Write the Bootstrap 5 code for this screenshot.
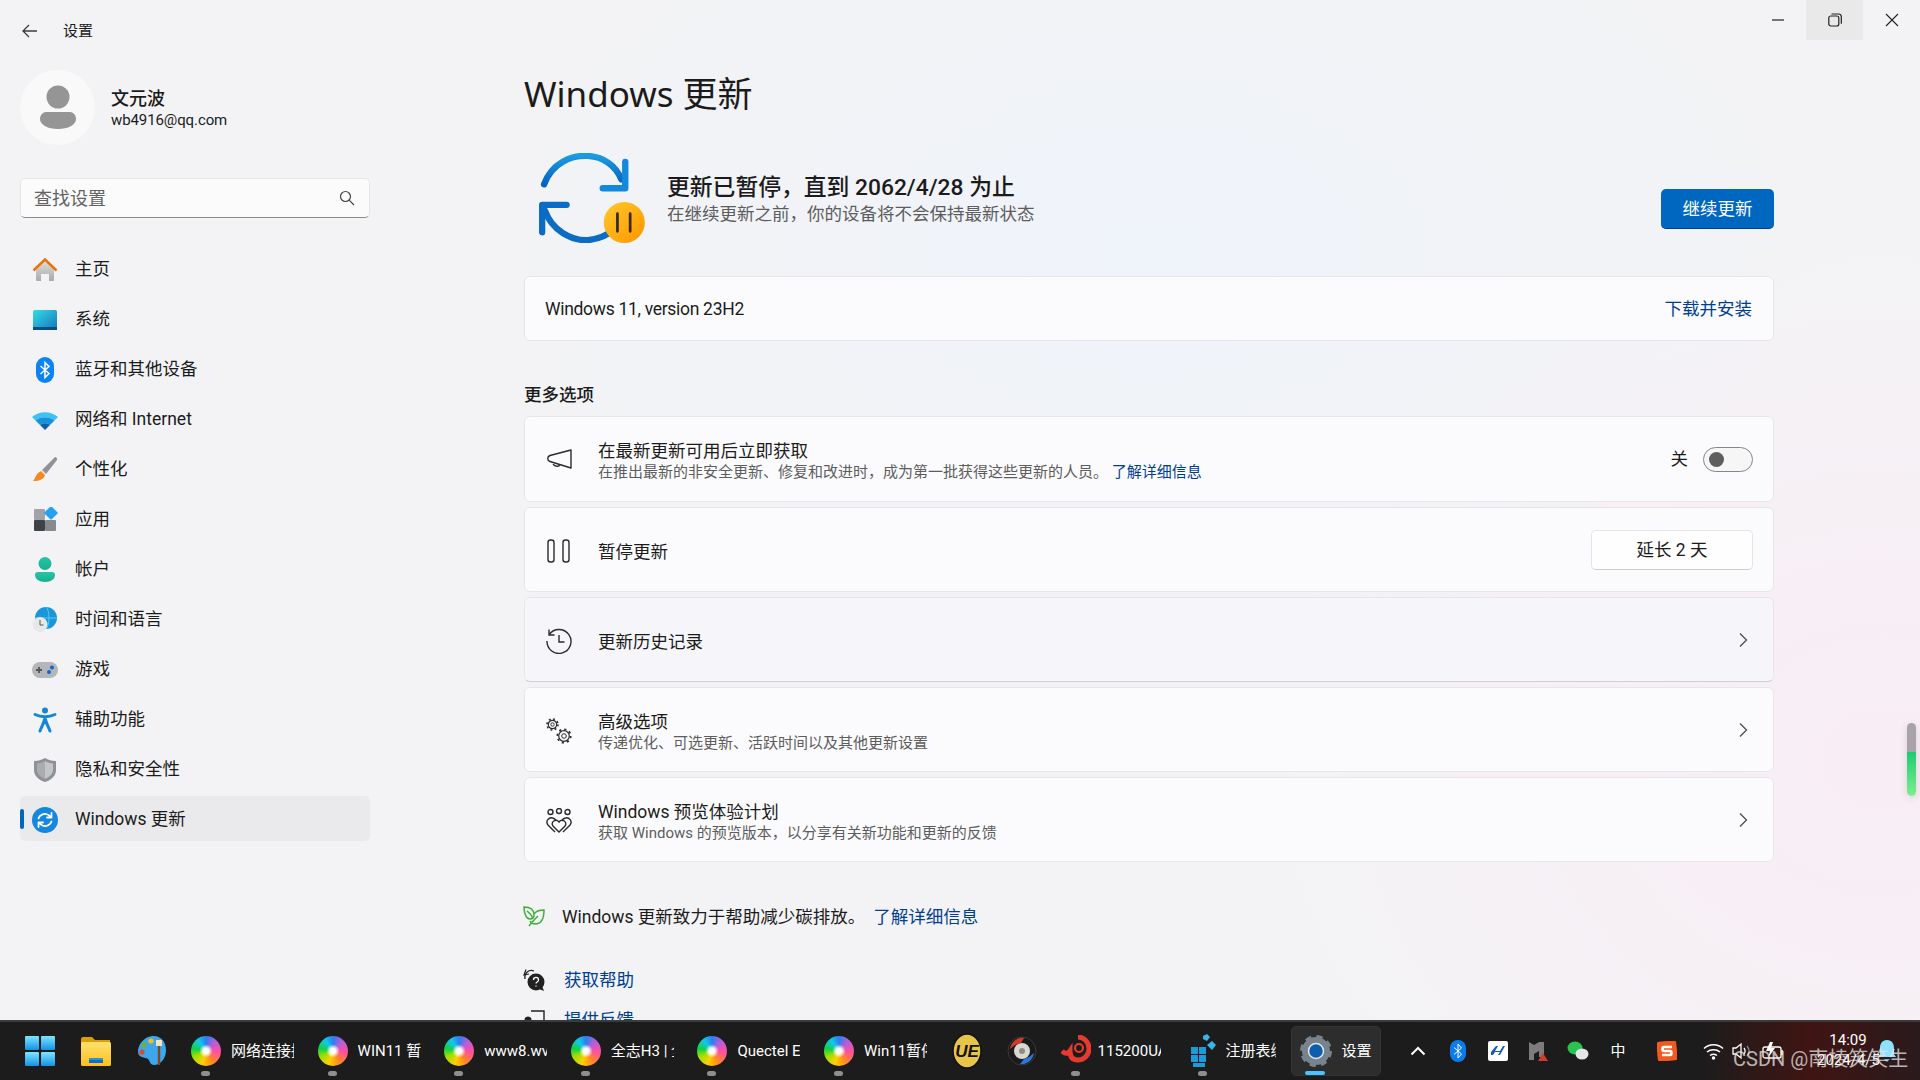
<!DOCTYPE html>
<html lang="zh-CN">
<head>
<meta charset="UTF-8">
<meta name="viewport" content="width=device-width, initial-scale=1">
<title>设置 - Windows 更新</title>
<link rel="stylesheet" href="https://cdn.jsdelivr.net/npm/bootstrap@5.3.0/dist/css/bootstrap.min.css">
<style>
html, body { height: 100%; }
body { width: 1920px; height: 1080px; overflow: hidden; font-family: Roboto, "Noto Sans CJK SC", sans-serif; font-size: 17.5px; color: #1b1b1b; background: #f3f3f3; }
a { text-decoration: none; }
.app-window { height: 1020px; overflow: hidden; background:
  radial-gradient(ellipse 620px 520px at 1880px 760px, #f9edf5 0%, rgba(249,237,245,0) 100%),
  radial-gradient(ellipse 700px 420px at 1150px 250px, #eff3fa 0%, rgba(239,243,250,0) 100%),
  #f3f3f5; }
.side-col { width: 390px; padding-left: 20px; flex: none; }
.back-row { height: 62px; font-size: 15px; }
.back-row span { margin-left: 23px; }
.user-row { height: 75px; margin-top: 8px; }
.avatar-circle { width: 75px; height: 75px; border-radius: 50%; background: #f9f9f9; }
.user-name { font-size: 18px; font-weight: 500; line-height: 24px; margin-top: 2px; }
.user-mail { font-size: 15px; line-height: 20px; margin-top: -1px; letter-spacing: -.1px; }
.search-box { width: 350px; height: 40px; margin-top: 33px; background: #fbfbfb; border: 1px solid #e6e6e6; border-bottom-color: #8b8b8b; border-radius: 5px; padding: 0 14px 0 13px; color: #636363; font-size: 18px; }
.side-nav { margin-top: 28px; width: 350px; }
.side-item { height: 45px; margin-bottom: 5px; color: #1b1b1b; padding-left: 12px; padding-top: 2px; border-radius: 5px; position: relative; }
.side-item svg { width: 26px; height: 26px; margin-right: 17px; flex: none; }
.side-item.is-on { background: #eaeaec; }
.side-item.is-on::before { content: ""; position: absolute; left: 0; top: 13px; width: 4px; height: 20px; border-radius: 2px; background: #0067c0; }
.main-col { width: 1250px; margin-left: 134px; flex: none; }
.page-title { font-family: "Noto Sans", "Noto Sans CJK SC", sans-serif; font-size: 35px; font-weight: 400; line-height: 50px; margin: 69px 0 0; }
.status-row { height: 96px; margin-top: 31px; }
.status-pic { width: 143px; flex: none; padding-left: 15px; }
.status-head { font-size: 22.8px; line-height: 30px; font-weight: 500; margin-top: 2px; }
.status-sub { line-height: 24px; color: #5d5d5d; margin-top: -1px; }
.btn-go { width: 113px; height: 40px; padding: 2px 0 0; font-size: 17.5px; background: #0067c0; border: 0; border-bottom: 1px solid #003e92; border-radius: 5px; color: #fff; margin-bottom: 17px; }
.pane { background: #fbfbfd; border: 1px solid #e7e7ea; border-radius: 6px; }
.pane-ver { height: 65px; margin-top: 30px; padding: 2px 21px 0 20px; }
.pane-ver span { letter-spacing: -.3px; }
.blue-link { color: #003e92; }
.section-label { line-height: 24px; margin-top: 42px; margin-bottom: 9px; font-weight: 500; font-size: 17.5px; }
.opt-list { gap: 5px; }
.opt-row { height: 85px; padding-right: 22px; padding-top: 4px; }
.opt-row.first-row { height: 86px; }
.opt-row.hover-row { background: #f6f6fa; border-bottom-color: #cfcfd4; }
.opt-ico { width: 73px; padding-left: 21px; flex: none; margin-top: -3px; }
.opt-title { line-height: 22px; }
.opt-sub { font-size: 15px; line-height: 20px; color: #5d5d5d; }
.opt-sub a { color: #003e92; }
.off-word { margin-right: 15px; margin-top: -3px; }
.toggle-shape { width: 50px; height: 25px; border: 1px solid #868686; border-radius: 13px; background: #f6f6f6; padding-left: 5px; margin-right: -2px; margin-top: -3px; }
.toggle-shape i { display: block; width: 15px; height: 15px; border-radius: 50%; background: #5e5e5e; }
.btn-ext { width: 162px; height: 40px; padding: 0; background: #fefefe; border: 1px solid #e5e5e5; border-bottom-color: #cdcdcd; border-radius: 5px; font-size: 17.5px; color: #1b1b1b; margin-right: -2px; margin-top: -3px; }
.chev-ico { margin-top: -3px; }
.foot-row { height: 30px; }
.foot-row svg { width: 24px; height: 24px; margin-left: -2px; margin-right: 16px; flex: none; }
.foot-row.help-row svg { margin-right: 18px; }
.vol-bar { position: absolute; left: 1907px; top: 723px; width: 9px; height: 73px; border-radius: 5px; background: linear-gradient(#a7a3a7 0 40%, #1fcb73 40%, #7cef8c 100%); box-shadow: 0 2px 8px rgba(0,0,0,.12); }
.task-bar { height: 60px; color: #fff; font-size: 15px; border-top: 2px solid #3b3b3b; padding-left: 12px; background: linear-gradient(90deg, #1c1c1c 0 1700px, #3f1512 1810px, #2a1a1d 1920px); }
.tb-ico { width: 56px; height: 100%; flex: none; }
.tb-app { width: 126.6px; height: 100%; padding-left: 11px; flex: none; position: relative; }
.tb-app svg, .tb-cur svg { flex: none; }
.tb-app .tb-label { width: 63px; margin-left: 10px; white-space: nowrap; overflow: hidden; }
.tb-app::after { content: ""; position: absolute; left: 21px; top: 49px; width: 9px; height: 5px; border-radius: 3px; background: #8f8f8f; }
.swirl { width: 30px; height: 30px; border-radius: 50%; flex: none; background: radial-gradient(circle, #fff 0 12%, rgba(255,255,255,0) 32%), conic-gradient(#2a7ff0, #b25fd8 12%, #ff4fa0 26%, #ff8a1e 42%, #ffd000 55%, #9be000 68%, #12d04a 78%, #12c8e8 90%, #2a7ff0); }
.tb-cur { width: 90px; height: 50px; padding-left: 8px; margin: 0; background: #2d2d2d; border: 1px solid #353535; border-radius: 5px; position: relative; flex: none; }
.tb-cur span { margin-left: 10px; }
.tb-cur::after { content: ""; position: absolute; left: 13px; bottom: 0; width: 20px; height: 4px; border-radius: 2px; background: #4cc2ff; }
.tray-box { margin-left: auto; padding-right: 25px; height: 100%; }
.tray-ico { height: 100%; flex: none; }
.clock-box { width: 62px; margin-left: 27px; margin-top: -3px; text-align: center; line-height: 20px; font-size: 15px; flex: none; }
.mark-text { position: absolute; left: 1733px; top: 1046px; font-size: 20px; line-height: 26px; color: rgba(232,232,232,.75); white-space: nowrap; }
</style>
</head>
<body>

<svg width="0" height="0" class="position-absolute">
  <defs>
    <linearGradient id="gBlue" x1="0" y1="0" x2="0" y2="1"><stop offset="0" stop-color="#1a9be2"/><stop offset="1" stop-color="#0664bd"/></linearGradient>
    <linearGradient id="gOrange" x1="0" y1="0" x2="1" y2="1"><stop offset="0" stop-color="#ffc92a"/><stop offset="1" stop-color="#ff9500"/></linearGradient>
    <linearGradient id="gWall" x1="0" y1="0" x2="0" y2="1"><stop offset="0" stop-color="#dcdcdc"/><stop offset="1" stop-color="#a9a9a9"/></linearGradient>
    <linearGradient id="gSys" x1="0" y1="0" x2="1" y2="1"><stop offset="0" stop-color="#35dbe6"/><stop offset="1" stop-color="#1276bd"/></linearGradient>
    <linearGradient id="gTeal" x1="0" y1="0" x2="0" y2="1"><stop offset="0" stop-color="#2cc3a8"/><stop offset="1" stop-color="#13b08f"/></linearGradient>
    <linearGradient id="gWin" x1="0" y1="0" x2="0" y2="1"><stop offset="0" stop-color="#7ce6ff"/><stop offset="1" stop-color="#1491e6"/></linearGradient>
    <linearGradient id="gFold" x1="0" y1="0" x2="0" y2="1"><stop offset="0" stop-color="#ffdf70"/><stop offset="1" stop-color="#fcc21b"/></linearGradient>
    <symbol id="lineChev" viewBox="0 0 16 16"><path d="M5 1.500 11.500 8 5 14.500" fill="none" stroke="#4c4c4c" stroke-width="1.300"/></symbol>
  </defs>
</svg>

<div class="app-window d-flex position-relative">

  <aside class="side-col">
    <div class="back-row d-flex align-items-center">
      <svg width="20" height="20" viewBox="0 0 20 20"><path d="M17 10H3M9 4 3 10l6 6" fill="none" stroke="#3c3c3c" stroke-width="1.300"/></svg>
      <span>设置</span>
    </div>
    <div class="user-row d-flex align-items-center">
      <div class="avatar-circle d-flex align-items-center justify-content-center me-3">
        <svg width="38" height="46" viewBox="0 0 38 46"><circle cx="19" cy="12" r="11.500" fill="#959595"/><path d="M1 34c0-4 3-7 6-7h24c3 0 6 3 6 7 0 6-8 10-18 10S1 40 1 34z" fill="#959595"/></svg>
      </div>
      <div>
        <div class="user-name">文元波</div>
        <div class="user-mail">wb4916@qq.com</div>
      </div>
    </div>
    <div class="search-box d-flex align-items-center justify-content-between">
      <span>查找设置</span>
      <svg width="16" height="16" viewBox="0 0 16 16"><circle cx="6.500" cy="6.500" r="5" fill="none" stroke="#444" stroke-width="1.200"/><path d="m10.200 10.200 4.800 4.800" stroke="#444" stroke-width="1.200"/></svg>
    </div>

    <nav class="side-nav nav flex-column">
      <a class="side-item d-flex align-items-center" href="#">
        <svg viewBox="0 0 26 26"><path d="M4 13 13 4.500 22 13V23a1 1 0 0 1-1 1h-4v-7H9v7H5a1 1 0 0 1-1-1z" fill="url(#gWall)"/><path d="M1.500 13.500 13 2.500l11.500 11" fill="none" stroke="#e8730c" stroke-width="2.600"/></svg>
        主页
      </a>
      <a class="side-item d-flex align-items-center" href="#">
        <svg viewBox="0 0 26 26"><rect x="1" y="3" width="24" height="20" rx="1.500" fill="url(#gSys)"/><rect x="1" y="20" width="24" height="3" fill="#0b4d7c"/></svg>
        系统
      </a>
      <a class="side-item d-flex align-items-center" href="#">
        <svg viewBox="0 0 26 26"><rect x="4" y="0" width="18" height="26" rx="9" fill="#0a84f4"/><path d="M8.500 9 17 16.500 13 20.500V5.500l4 4L8.500 17" fill="none" stroke="#fff" stroke-width="1.500"/></svg>
        蓝牙和其他设备
      </a>
      <a class="side-item d-flex align-items-center" href="#">
        <svg viewBox="0 0 26 26"><path d="M0 10C7 3.500 19 3.500 26 10l-3.500 3.500c-5-4.500-14-4.500-19 0z" fill="#3ec1f3"/><path d="M3.500 13.500c5-4.500 14-4.500 19 0L18 18c-3-2.500-7-2.500-10 0z" fill="#1992de"/><path d="M8 18c3-2.500 7-2.500 10 0l-5 5z" fill="#0c5fa8"/></svg>
        网络和 Internet
      </a>
      <a class="side-item d-flex align-items-center" href="#">
        <svg viewBox="0 0 26 26"><path d="M23 0c1.500 0 2.500 1.500 2 3L14 17l-4-4z" fill="#8f9398"/><path d="M9 14l4 4c-1 4-5 6-12 6 2.500-2 2-7 8-10z" fill="#f38a1c"/></svg>
        个性化
      </a>
      <a class="side-item d-flex align-items-center" href="#">
        <svg viewBox="0 0 26 26"><rect x="2" y="2" width="11" height="11" rx="1" fill="#9fa3a8"/><rect x="2" y="13" width="11" height="11" rx="1" fill="#3f4347"/><rect x="13" y="13" width="11" height="11" rx="1" fill="#868a8e"/><rect x="14" y="1" width="10" height="10" rx="1" fill="#27a0ee" transform="rotate(45 19 6)"/></svg>
        应用
      </a>
      <a class="side-item d-flex align-items-center" href="#">
        <svg viewBox="0 0 26 26"><circle cx="13" cy="6.500" r="6.500" fill="url(#gTeal)"/><path d="M3 18a3 3 0 0 1 3-3h14a3 3 0 0 1 3 3c0 4-4 7-10 7S3 22 3 18z" fill="url(#gTeal)"/></svg>
        帐户
      </a>
      <a class="side-item d-flex align-items-center" href="#">
        <svg viewBox="0 0 26 26"><circle cx="14" cy="11" r="11" fill="#1a97dc"/><path d="M14 0c4 3 4 19 0 22M3 11h22" stroke="#5cc7ee" fill="none"/><circle cx="8" cy="17.500" r="7.500" fill="#e8e8e8"/><path d="M8 13v5h3.500" stroke="#555" fill="none"/></svg>
        时间和语言
      </a>
      <a class="side-item d-flex align-items-center" href="#">
        <svg viewBox="0 0 26 26"><rect x="0" y="5" width="26" height="16" rx="8" fill="#b4b6ba"/><path d="M7 10v6M4 13h6" stroke="#555" stroke-width="1.800"/><circle cx="20" cy="10.500" r="2" fill="#1267cf"/><circle cx="17" cy="15" r="2" fill="#1267cf"/></svg>
        游戏
      </a>
      <a class="side-item d-flex align-items-center" href="#">
        <svg viewBox="0 0 26 26"><circle cx="13" cy="3.500" r="3" fill="#1685d8"/><path d="M3 7.500c3 1.500 6 2.300 10 2.300s7-.8 10-2.300M13 10c-.5 5-3 9-5 14M13 10c.5 5 3 9 5 14" fill="none" stroke="#1685d8" stroke-width="3" stroke-linecap="round"/></svg>
        辅助功能
      </a>
      <a class="side-item d-flex align-items-center" href="#">
        <svg viewBox="0 0 26 26"><path d="M13 1c3 2 7 3 11 3v9c0 6-5 10-11 12C7 23 2 19 2 13V4c4 0 8-1 11-3z" fill="#8e9296"/><path d="M13 4c2.500 1.500 5 2.300 8 2.500V13c0 4-3.500 7-8 9z" fill="#c3c5c8"/><path d="M13 4c-2.500 1.500-5 2.300-8 2.500V13c0 4 3.500 7 8 9z" fill="#a9acb0"/></svg>
        隐私和安全性
      </a>
      <a class="side-item is-on d-flex align-items-center" href="#">
        <svg viewBox="0 0 26 26"><circle cx="13" cy="13" r="13" fill="#1488dc"/><path d="M6.500 11.500C7.500 8 12 6 15.500 7.500c1.500.6 2.500 1.500 3.200 2.700M19.500 6v4.500H15M19.500 14.500C18.500 18 14 20 10.500 18.500c-1.500-.6-2.500-1.500-3.200-2.700M6.500 20v-4.500H11" fill="none" stroke="#fff" stroke-width="1.800" stroke-linecap="round" stroke-linejoin="round"/></svg>
        Windows 更新
      </a>
    </nav>
  </aside>

  <main class="main-col">
    <h1 class="page-title">Windows 更新</h1>

    <div class="status-row d-flex align-items-center">
      <div class="status-pic">
        <svg width="106" height="90" viewBox="0 0 108 92">
          <path d="M5 32C13 10 33 2 50 3c15 1 28 9 34 24" fill="none" stroke="url(#gBlue)" stroke-width="6.500" stroke-linecap="round"/>
          <path d="M88 9v27H65" fill="none" stroke="#1488dc" stroke-width="6.500" stroke-linecap="round" stroke-linejoin="round"/>
          <path d="M6 59c7 20 27 31 44 30 10-1 19-4 26-11" fill="none" stroke="#0a6cc4" stroke-width="6.500" stroke-linecap="round"/>
          <path d="M3 81V53h25" fill="none" stroke="#0a6cc4" stroke-width="6.500" stroke-linecap="round" stroke-linejoin="round"/>
          <circle cx="87" cy="71" r="21" fill="url(#gOrange)"/>
          <path d="M80 62v18M93 62v18" stroke="#3a2a10" stroke-width="2.800" stroke-linecap="round"/>
        </svg>
      </div>
      <div class="flex-grow-1">
        <div class="status-head">更新已暂停，直到 2062/4/28 为止</div>
        <div class="status-sub">在继续更新之前，你的设备将不会保持最新状态</div>
      </div>
      <button class="btn btn-go align-self-end">继续更新</button>
    </div>

    <div class="pane pane-ver d-flex align-items-center justify-content-between">
      <span>Windows 11, version 23H2</span>
      <a class="blue-link" href="#">下载并安装</a>
    </div>

    <div class="section-label">更多选项</div>

    <div class="opt-list d-flex flex-column">
      <div class="pane opt-row first-row d-flex align-items-center">
        <div class="opt-ico">
          <svg width="26" height="26" viewBox="0 0 26 26"><path d="M25 3 4 8.500c-3 1-3 5 0 6L25 21zM7 15.500c0 4 6 5 7 2" fill="none" stroke="#2b2b2b" stroke-width="1.400" stroke-linejoin="round"/></svg>
        </div>
        <div class="flex-grow-1">
          <div class="opt-title">在最新更新可用后立即获取</div>
          <div class="opt-sub">在推出最新的非安全更新、修复和改进时，成为第一批获得这些更新的人员。 <a href="#">了解详细信息</a></div>
        </div>
        <span class="off-word">关</span>
        <div class="toggle-shape d-flex align-items-center"><i></i></div>
      </div>

      <div class="pane opt-row d-flex align-items-center">
        <div class="opt-ico">
          <svg width="26" height="26" viewBox="0 0 26 26"><rect x="2" y="2" width="6" height="22" rx="2.500" fill="none" stroke="#2b2b2b" stroke-width="1.400"/><rect x="17" y="2" width="6" height="22" rx="2.500" fill="none" stroke="#2b2b2b" stroke-width="1.400"/></svg>
        </div>
        <div class="flex-grow-1 opt-title">暂停更新</div>
        <button class="btn btn-ext">延长 2 天</button>
      </div>

      <div class="pane opt-row hover-row d-flex align-items-center">
        <div class="opt-ico">
          <svg width="26" height="26" viewBox="0 0 26 26"><path d="M3.200 6.500A12 12 0 1 1 1 13" fill="none" stroke="#2b2b2b" stroke-width="1.400"/><path d="M3 1.500v5.500h5.500M13 7v7h5.500" fill="none" stroke="#2b2b2b" stroke-width="1.400"/></svg>
        </div>
        <div class="flex-grow-1 opt-title">更新历史记录</div>
        <svg class="chev-ico" width="16" height="16"><use href="#lineChev"/></svg>
      </div>

      <div class="pane opt-row d-flex align-items-center">
        <div class="opt-ico">
          <svg width="26" height="26" viewBox="0 0 26 26" fill="none" stroke="#2b2b2b">
            <circle cx="6.500" cy="6.500" r="4.200" stroke-width="1.200"/><circle cx="6.500" cy="6.500" r="5.500" stroke-width="1.600" stroke-dasharray="1.800 2.520"/><circle cx="6.500" cy="6.500" r="1.700"/>
            <circle cx="18" cy="18" r="5.300" stroke-width="1.200"/><circle cx="18" cy="18" r="6.700" stroke-width="1.800" stroke-dasharray="2.200 3.060"/><circle cx="18" cy="18" r="2.300"/>
          </svg>
        </div>
        <div class="flex-grow-1">
          <div class="opt-title">高级选项</div>
          <div class="opt-sub">传递优化、可选更新、活跃时间以及其他更新设置</div>
        </div>
        <svg class="chev-ico" width="16" height="16"><use href="#lineChev"/></svg>
      </div>

      <div class="pane opt-row d-flex align-items-center">
        <div class="opt-ico">
          <svg width="26" height="26" viewBox="0 0 26 26" fill="none" stroke="#2b2b2b" stroke-width="1.400">
            <circle cx="4.500" cy="4" r="2.500"/><circle cx="13" cy="3" r="2.500"/><circle cx="21.500" cy="4" r="2.500"/>
            <path d="M9 24 2 17c-3-4 1-8 4.500-7 2 .5 3 1.500 3.500 2.500M17 24l7-7c3-4-1-8-4.500-7-2 .5-3 1.500-3.500 2.500"/>
            <path d="M13 24 7 18c-3-4 3-8 6-4 3-4 9 0 6 4z"/>
          </svg>
        </div>
        <div class="flex-grow-1">
          <div class="opt-title">Windows 预览体验计划</div>
          <div class="opt-sub">获取 Windows 的预览版本，以分享有关新功能和更新的反馈</div>
        </div>
        <svg class="chev-ico" width="16" height="16"><use href="#lineChev"/></svg>
      </div>
    </div>

    <div class="foot-row d-flex align-items-center" style="margin-top:40px">
      <svg viewBox="0 0 24 24" fill="none" stroke="#3fae3a" stroke-width="1.500"><path d="M2 2c6 0 10 2 10 8 0 3-2 4-4 4-4 0-6-6-6-12zM12 9c2-3 5-4 10-4 0 9-3 14-9 14-2 0-4-1-5-3M5 6c3 2 5 5 6 8M7 21c2-3 5-6 9-10"/></svg>
      <span>Windows 更新致力于帮助减少碳排放。</span>
      <a class="blue-link ms-2" href="#">了解详细信息</a>
    </div>

    <div class="foot-row help-row d-flex align-items-center" style="margin-top:33px">
      <svg viewBox="0 0 24 24"><circle cx="14" cy="14" r="8.500" fill="#222"/><path d="M17 21l5 2-2-5z" fill="#222"/><path d="M3 11C2 5 7 1 12 3" fill="none" stroke="#222" stroke-width="1.300"/><path d="M4 1.500 2 7l5-1" fill="none" stroke="#222" stroke-width="1.200"/><path d="M11.500 12c0-3.500 5-3.500 5 0 0 2-2.500 2-2.500 3.500M14 17.500v1" fill="none" stroke="#fff" stroke-width="1.300"/></svg>
      <a class="blue-link" href="#">获取帮助</a>
    </div>

    <div class="foot-row help-row d-flex align-items-center" style="margin-top:10px">
      <svg viewBox="0 0 24 24"><circle cx="6" cy="12" r="3.500" fill="#222"/><path d="M1 22c0-4 2-6 5-6s5 2 5 6z" fill="#222"/><path d="M9 3h13v11H11" fill="none" stroke="#222" stroke-width="1.400"/></svg>
      <a class="blue-link" href="#">提供反馈</a>
    </div>
  </main>

  <div class="position-absolute top-0 end-0 d-flex" style="width:171px;height:40px">
    <div class="flex-fill d-flex align-items-center justify-content-center"><svg width="14" height="14" viewBox="0 0 14 14"><path d="M1 7h12" stroke="#222" stroke-width="1.200"/></svg></div>
    <div class="flex-fill d-flex align-items-center justify-content-center" style="background:#e9e9e9"><svg width="14" height="14" viewBox="0 0 14 14"><rect x=".8" y="3" width="10" height="10" rx="2" fill="none" stroke="#222" stroke-width="1.200"/><path d="M3.500 1h7a2.800 2.800 0 0 1 2.800 2.800v7" fill="none" stroke="#222" stroke-width="1.200"/></svg></div>
    <div class="flex-fill d-flex align-items-center justify-content-center"><svg width="14" height="14" viewBox="0 0 14 14"><path d="m1 1 12 12M13 1 1 13" stroke="#222" stroke-width="1.100"/></svg></div>
  </div>
</div>

<div class="vol-bar"></div>

<footer class="task-bar d-flex align-items-center">
  <div class="tb-ico d-flex align-items-center justify-content-center">
    <svg width="30" height="30" viewBox="0 0 30 30" fill="url(#gWin)"><rect x="0" y="0" width="14" height="14" rx="1"/><rect x="16" y="0" width="14" height="14" rx="1"/><rect x="0" y="16" width="14" height="14" rx="1"/><rect x="16" y="16" width="14" height="14" rx="1"/></svg>
  </div>
  <div class="tb-ico d-flex align-items-center justify-content-center">
    <svg width="32" height="30" viewBox="0 0 32 30"><path d="M1 3a2 2 0 0 1 2-2h9l3 3h15v4H1z" fill="#d9a006"/><rect x="1" y="6" width="30" height="24" rx="1.500" fill="url(#gFold)"/><path d="M9 22h14v5H9z" fill="#0c72c9"/><path d="M9 23h14" stroke="#4fb2ef"/></svg>
  </div>
  <div class="tb-ico d-flex align-items-center justify-content-center">
    <svg width="30" height="32" viewBox="0 0 30 32"><path d="M15 1c9-1 14 6 14 14s-5 15-12 15c-4 0-4-4-6-6-3-2-10-1-10-7C1 9 7 2 15 1z" fill="#3ea6ea"/><circle cx="14" cy="6" r="2.600" fill="#f2c21a"/><circle cx="7" cy="10" r="2.600" fill="#74b22d"/><circle cx="5" cy="17" r="2.600" fill="#dd4a2b"/><path d="M22 9v21" stroke="#7a4a22" stroke-width="2.400"/><path d="M19 5h6v6h-6z" fill="#f4e3c2"/></svg>
  </div>

  <div class="tb-app d-flex align-items-center"><div class="swirl"></div><div class="tb-label">网络连接接</div></div>
  <div class="tb-app d-flex align-items-center"><div class="swirl"></div><div class="tb-label">WIN11 暂停</div></div>
  <div class="tb-app d-flex align-items-center"><div class="swirl"></div><div class="tb-label">www8.wvw</div></div>
  <div class="tb-app d-flex align-items-center"><div class="swirl"></div><div class="tb-label">全志H3 | 全</div></div>
  <div class="tb-app d-flex align-items-center"><div class="swirl"></div><div class="tb-label">Quectel EC</div></div>
  <div class="tb-app d-flex align-items-center"><div class="swirl"></div><div class="tb-label">Win11暂停</div></div>

  <div class="tb-ico d-flex align-items-center justify-content-center" style="width:54px">
    <svg width="30" height="36" viewBox="0 0 30 36"><ellipse cx="15" cy="18" rx="14" ry="17" fill="#e7c44a" stroke="#111" stroke-width="1.500"/><text x="15" y="24" text-anchor="middle" font-family="Liberation Sans" font-weight="700" font-style="italic" font-size="17" fill="#111">UE</text></svg>
  </div>
  <div class="tb-ico d-flex align-items-center justify-content-center">
    <svg width="30" height="32" viewBox="0 0 30 32"><circle cx="15" cy="16" r="14" fill="#1a1a1a" stroke="#3a3a3a"/><circle cx="15" cy="16" r="8" fill="#d8d8d0"/><circle cx="15" cy="16" r="3" fill="#8d8d85"/><path d="M3 14C4 7 10 2 17 3l-3 5-6 2z" fill="#d23a32"/><path d="M27 18c-1 7-7 12-14 11l4-5 5-2z" fill="#2f74d8"/></svg>
  </div>

  <div class="tb-app d-flex align-items-center" style="width:127px">
    <svg width="30" height="32" viewBox="0 0 30 32"><path d="M1 16c3 3 6 3 8 0 0 6 3 9 8 9 6 0 11-5 11-11C28 7 23 2 17 2" fill="none" stroke="#e63a2e" stroke-width="5"/><circle cx="18" cy="13" r="4" fill="none" stroke="#e63a2e" stroke-width="2.200"/></svg>
    <div class="tb-label" style="margin-left:7px">115200UA</div>
  </div>
  <div class="tb-app d-flex align-items-center" style="width:114px">
    <svg width="30" height="36" viewBox="0 0 30 36" fill="#1f9ad6"><path d="M3 14h7v7H3zM11 14h7v7h-7zM3 22h7v7H3zM11 22h7v7h-7zM5 30h12v4H5z"/><path d="M19 12l5-4 4 4-4 5zM15 3l4-2 3 3-3 4-4-2z" fill="#37b5ea"/></svg>
    <div class="tb-label" style="width:50px;margin-left:8px">注册表编</div>
  </div>
  <div class="tb-cur d-flex align-items-center">
    <svg width="32" height="32" viewBox="0 0 32 32"><circle cx="16" cy="16" r="10" fill="none" stroke="#77848e" stroke-width="8"/><circle cx="16" cy="16" r="14" fill="none" stroke="#77848e" stroke-width="4" stroke-dasharray="6 5"/><circle cx="16" cy="16" r="7.500" fill="#0c5fb0" stroke="#e6e6e6" stroke-width="1.500"/></svg>
    <span>设置</span>
  </div>

  <div class="tray-box d-flex align-items-center">
    <div class="tray-ico d-flex align-items-center justify-content-center" style="width:40px"><svg width="16" height="10" viewBox="0 0 16 10"><path d="M1.500 8.500 8 2l6.500 6.500" fill="none" stroke="#fff" stroke-width="2"/></svg></div>
    <div class="tray-ico d-flex align-items-center justify-content-center" style="width:40px"><svg width="16" height="22" viewBox="0 0 16 22"><rect width="16" height="22" rx="8" fill="#0a7cf0"/><path d="M4 7.500 11.500 14 8 18V4l3.500 4L4 14.500" fill="none" stroke="#fff"/></svg></div>
    <div class="tray-ico d-flex align-items-center justify-content-center" style="width:40px"><svg width="20" height="20" viewBox="0 0 20 20"><rect width="20" height="20" rx="2" fill="#fff"/><path d="M3 11 8 5h2l-3 5h5l3-5h2l-5 9H10l2-3H7l-2 3H3z" fill="#1557c9"/></svg></div>
    <div class="tray-ico d-flex align-items-center justify-content-center" style="width:40px"><svg width="20" height="22" viewBox="0 0 20 22"><path d="M1 2l5 3 5-3h5v15H11v-6l-5 3v6H1z" fill="#7c7c7c"/><path d="M15 13l5 8H10z" fill="#d23b2c"/></svg></div>
    <div class="tray-ico d-flex align-items-center justify-content-center" style="width:40px"><svg width="22" height="20" viewBox="0 0 22 20"><ellipse cx="8" cy="7" rx="7.500" ry="6.500" fill="#2ac24e"/><ellipse cx="15" cy="13" rx="6.500" ry="5.500" fill="#e6e6e6"/></svg></div>
    <div class="tray-ico d-flex align-items-center justify-content-center" style="width:40px">中</div>
    <div class="tray-ico d-flex align-items-center justify-content-center" style="width:58px"><svg width="20" height="20" viewBox="0 0 20 20"><rect width="20" height="20" rx="3" fill="#ee5a1f" transform="rotate(-6 10 10)"/><path d="M15 6H7c-2 0-2 4 0 4h6c2 0 2 4 0 4H5" fill="none" stroke="#fff" stroke-width="2.600"/></svg></div>
    <div class="tray-ico d-flex align-items-center justify-content-center" style="width:34px"><svg width="21" height="17" viewBox="0 0 21 17" fill="none" stroke="#fff" stroke-width="1.500"><path d="M1 5.500c5-5 14-5 19 0M4 9c3.500-3 9.500-3 13 0M7 12.500c2-1.500 5-1.500 7 0"/><circle cx="10.500" cy="15" r="1" fill="#fff"/></svg></div>
    <div class="tray-ico d-flex align-items-center justify-content-center" style="width:26px"><svg width="22" height="18" viewBox="0 0 22 18" fill="none" stroke="#fff" stroke-width="1.300"><path d="M1 6h3l5-4v14l-5-4H1zM12 6c1.500 2 1.500 4 0 6"/><path d="M15 4c2.500 3 2.500 7 0 10" stroke="#8a8a8a"/></svg></div>
    <div class="tray-ico d-flex align-items-center justify-content-center" style="width:34px"><svg width="22" height="20" viewBox="0 0 22 20"><rect x="1" y="6" width="18" height="11" rx="2" fill="none" stroke="#fff" stroke-width="1.300"/><path d="M20 9v5" stroke="#fff" stroke-width="1.500"/><path d="M8 1 4 10h4l-2 7 7-10H9l2-6z" fill="#fff"/></svg></div>
    <div class="clock-box">
      <div>14:09</div>
      <div>2024/4/5</div>
    </div>
    <div class="tray-ico d-flex align-items-center justify-content-center" style="width:16px"><svg width="20" height="24" viewBox="0 0 20 24" style="flex:none"><path d="M10 1c5 0 7 4 7 8v6l2 3H1l2-3V9c0-4 2-8 7-8z" fill="#90e2fb"/><path d="M7 20h6l-3 3z" fill="#5cb6d4"/></svg></div>
  </div>
</footer>

<div class="mark-text">CSDN @南棱笑笑生</div>

<script src="https://cdn.jsdelivr.net/npm/bootstrap@5.3.0/dist/js/bootstrap.bundle.min.js"></script>
</body>
</html>
